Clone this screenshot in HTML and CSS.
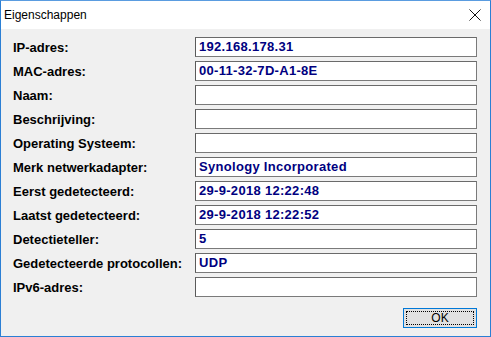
FILE: index.html
```html
<!DOCTYPE html>
<html>
<head>
<meta charset="utf-8">
<link rel="stylesheet" href="styles.css">
</head>
<body>
<div class="window">
  <div class="titlebar">
    <span class="title">Eigenschappen</span>
    <svg class="close" width="12" height="12" viewBox="0 0 12 12"><path d="M0.5 0.5 L11.5 11.5 M11.5 0.5 L0.5 11.5" stroke="#111" stroke-width="1" fill="none"/></svg>
  </div>
  <div class="content">
    <div class="fields">
      <div class="row"><span class="label">IP-adres:</span><div class="box">192.168.178.31</div></div>
      <div class="row"><span class="label">MAC-adres:</span><div class="box">00-11-32-7D-A1-8E</div></div>
      <div class="row"><span class="label">Naam:</span><div class="box"></div></div>
      <div class="row"><span class="label">Beschrijving:</span><div class="box"></div></div>
      <div class="row"><span class="label">Operating Systeem:</span><div class="box"></div></div>
      <div class="row"><span class="label">Merk netwerkadapter:</span><div class="box">Synology Incorporated</div></div>
      <div class="row"><span class="label">Eerst gedetecteerd:</span><div class="box">29-9-2018 12:22:48</div></div>
      <div class="row"><span class="label">Laatst gedetecteerd:</span><div class="box">29-9-2018 12:22:52</div></div>
      <div class="row"><span class="label">Detectieteller:</span><div class="box">5</div></div>
      <div class="row"><span class="label">Gedetecteerde protocollen:</span><div class="box">UDP</div></div>
      <div class="row"><span class="label">IPv6-adres:</span><div class="box"></div></div>
    </div>
    <div class="actions">
      <button class="ok"><span class="focus">OK</span></button>
    </div>
  </div>
</div>
</body>
</html>
```

FILE: styles.css
```css
* { box-sizing: border-box; }
html, body { margin: 0; padding: 0; }
body { width: 491px; height: 337px; overflow: hidden; background: #ffffff; }
.window {
  width: 491px;
  height: 337px;
  border: 1px solid #2b7fd4;
  border-top: 1px solid #5a9ce0;
  display: flex;
  flex-direction: column;
  background: #f0f0f0;
}
.titlebar {
  height: 28px;
  background: #ffffff;
  display: flex;
  align-items: center;
  justify-content: space-between;
  padding: 0 9px 1px 3px;
  flex: none;
}
.title {
  font-family: "Liberation Sans", Arial, sans-serif;
  font-size: 12px;
  color: #000;
}
.close { display: block; }
.content {
  flex: 1;
  display: flex;
  flex-direction: column;
  padding: 8px 13px 8px 12px;
}
.fields {
  display: flex;
  flex-direction: column;
  gap: 4px;
}
.row {
  display: grid;
  grid-template-columns: 182px 282px;
  height: 20px;
  align-items: center;
}
.label {
  font-family: "Liberation Sans", Arial, sans-serif;
  font-weight: bold;
  font-size: 13px;
  color: #000;
  white-space: nowrap;
}
.box {
  height: 20px;
  background: #ffffff;
  border: 1px solid #7a7a7a;
  border-left-color: #5a5a5a;
  border-top-color: #6a6a6a;
  padding: 0 0 0 3px;
  font-family: "Liberation Sans", Arial, sans-serif;
  font-weight: bold;
  font-size: 13px;
  letter-spacing: 0.3px;
  line-height: 18px;
  color: #000080;
  white-space: nowrap;
  overflow: hidden;
}
.actions {
  margin-top: auto;
  display: flex;
  justify-content: flex-end;
}
.ok {
  width: 74px;
  height: 20px;
  margin: 0;
  padding: 2px;
  border: 1px solid #0078d7;
  background: #e1e1e1;
  display: flex;
  font-family: "Liberation Sans", Arial, sans-serif;
  font-size: 12px;
  color: #000;
}
.focus {
  flex: 1;
  border: 1px dotted #000;
  display: flex;
  align-items: center;
  justify-content: center;
  line-height: 12px;
}
```
